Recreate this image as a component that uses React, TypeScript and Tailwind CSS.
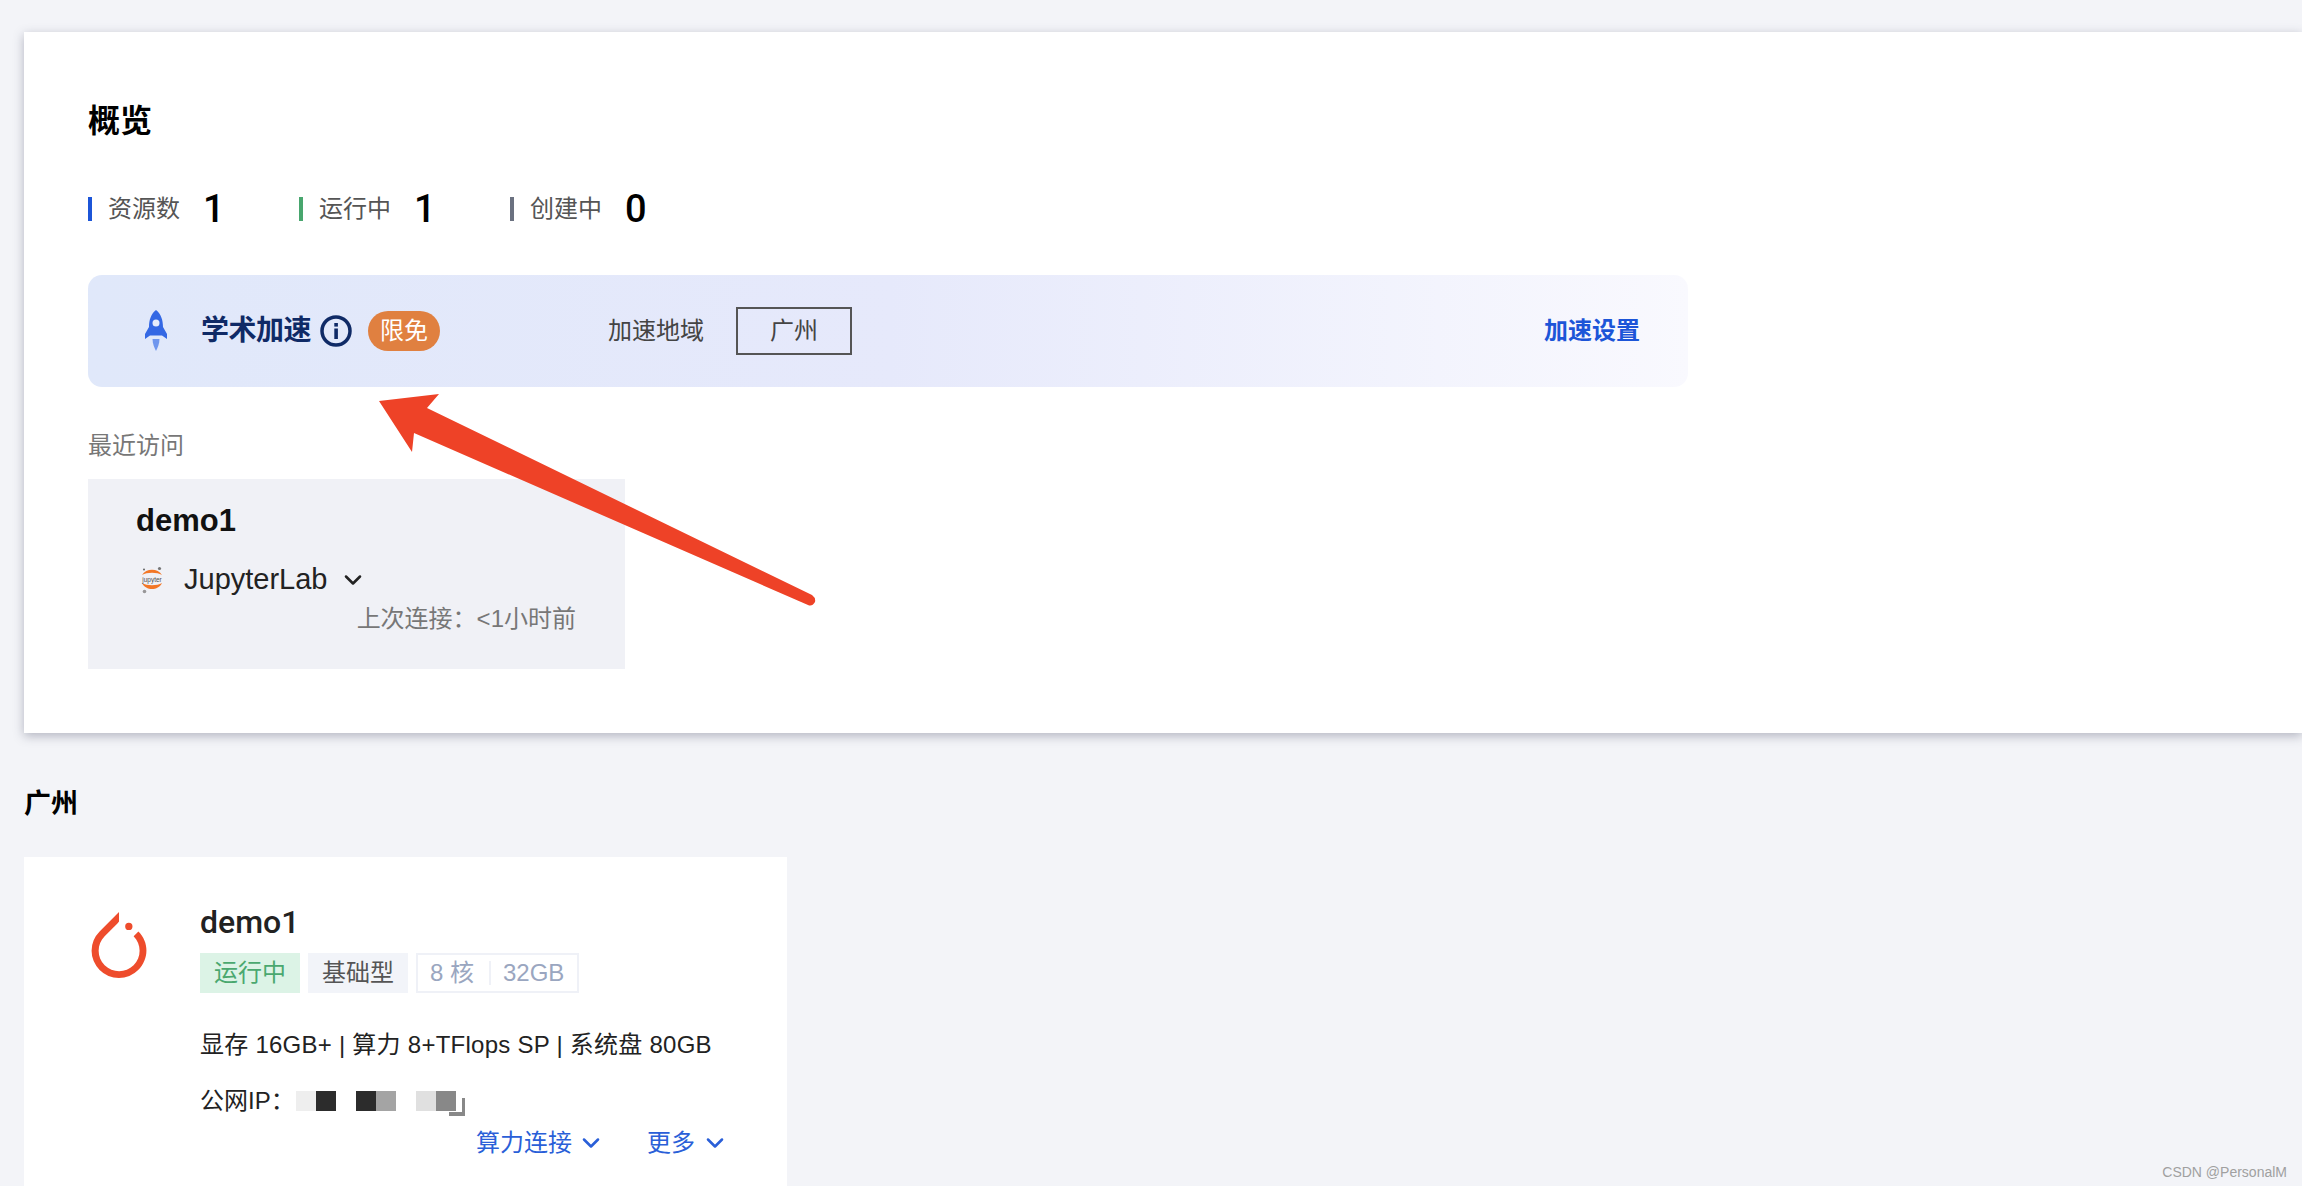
import { ChevronDown } from "lucide-react"
import { SiPytorch } from "react-icons/si"

const stats = [
  { label: "资源数", value: "1", bar: "bg-[#1c55d8]" },
  { label: "运行中", value: "1", bar: "bg-[#48a66e]" },
  { label: "创建中", value: "0", bar: "bg-[#6b7180]" },
]

function RocketIcon() {
  return (
    <svg width="24" height="42" viewBox="0 0 24 42" className="shrink-0">
      <path
        d="M12 0C17 4 19 10 19 17L23 24L23 29L18 25.500L6 25.500L1 29L1 24L5 17C5 10 7 4 12 0Z"
        fill="#3468e4"
      />
      <circle cx="12" cy="13" r="3.500" fill="#e6ecfb" />
      <path d="M8.500 29L15.500 29C15.500 34 13.500 38 12 41C10.500 38 8.500 34 8.500 29Z" fill="#6f96ee" />
    </svg>
  )
}

function InfoIcon() {
  return (
    <svg width="32" height="32" viewBox="0 0 32 32" className="shrink-0">
      <circle cx="16" cy="16" r="14" fill="none" stroke="#0f2a66" strokeWidth="3.500" />
      <rect x="14.300" y="13.500" width="3.600" height="10.500" fill="#0f2a66" />
      <rect x="14.300" y="8" width="3.600" height="3.600" fill="#0f2a66" />
    </svg>
  )
}

function JupyterIcon() {
  return (
    <svg width="26" height="28" viewBox="0 0 26 28" className="ml-[3px] shrink-0">
      <path d="M3 9C7 2 19 2 23 9C18 6 8 6 3 9Z" fill="#f37726" />
      <path d="M3 17C7 25 19 25 23 17C18 20 8 20 3 17Z" fill="#f37726" />
      <circle cx="20.500" cy="2.500" r="1.600" fill="#767677" />
      <circle cx="5" cy="3.500" r="1" fill="#616262" />
      <circle cx="5.500" cy="25.500" r="1.800" fill="#989798" />
      <text
        x="13"
        y="15.500"
        textAnchor="middle"
        fontSize="6.500"
        fill="#4e4e4e"
        fontFamily="'Liberation Sans', sans-serif"
      >
        jupyter
      </text>
    </svg>
  )
}

function BlurredIp() {
  return (
    <div className="relative flex h-5 w-[170px]">
      <div className="w-5 bg-[#eeeeee]" />
      <div className="w-5 bg-[#2c2c2c]" />
      <div className="w-5" />
      <div className="w-5 bg-[#2c2c2c]" />
      <div className="w-5 bg-[#a4a4a4]" />
      <div className="w-5" />
      <div className="w-5 bg-[#e0e0e0]" />
      <div className="w-5 bg-[#888888]" />
      <div className="absolute left-[153px] top-[21px] h-1 w-4 bg-[#888888]" />
      <div className="absolute left-[166px] top-[7px] h-[18px] w-[3px] bg-[#888888]" />
    </div>
  )
}

export default function App() {
  return (
    <div className="relative h-[1186px] overflow-hidden bg-[#f3f4f8] pl-6 pt-8 font-['Liberation_Sans','Noto_Sans_CJK_SC',sans-serif] text-[#222222]">
      {/* Overview */}
      <section className="h-[701px] bg-white pl-16 pt-[69px] shadow-[0_3px_10px_rgba(60,64,90,0.35)]">
        <h1 className="text-[32px] font-bold leading-[40px] text-black">概览</h1>

        <div className="mt-[48px] flex h-[40px] items-center">
          {stats.map((item) => (
            <div key={item.label} className="flex w-[211px] items-center">
              <span className={`h-6 w-1 ${item.bar}`} />
              <span className="ml-4 w-[95px] text-2xl text-[#555555]">{item.label}</span>
              <span className="font-['Roboto',sans-serif] text-[38px] font-medium leading-10 text-black">
                {item.value}
              </span>
            </div>
          ))}
        </div>

        {/* Academic acceleration banner */}
        <div className="mt-[46px] flex h-[112px] w-[1600px] items-center rounded-[14px] bg-gradient-to-r from-[#e0e8fa] via-[#e6e9fb] to-[#f9f9fe] pl-[56px] pr-[48px]">
          <RocketIcon />
          <span className="ml-[33px] w-[119px] text-[28px] font-bold tracking-[-0.5px] text-[#0f2a66]">学术加速</span>
          <InfoIcon />
          <span className="ml-4 flex h-10 w-[72px] items-center justify-center rounded-[20px] bg-[#e08040] text-2xl text-white">
            限免
          </span>
          <span className="ml-[168px] text-2xl text-[#444444]">加速地域</span>
          <span className="ml-[32px] flex h-12 w-[116px] items-center justify-center border-2 border-[#555555] text-2xl text-[#444444]">
            广州
          </span>
          <span className="ml-auto text-2xl font-bold text-[#1c55d8]">加速设置</span>
        </div>

        <p className="mt-[43px] text-2xl leading-8 text-[#777777]">最近访问</p>

        {/* Recent visit */}
        <div className="mt-[17px] h-[190px] w-[537px] bg-[#f0f1f6] pl-12 pr-[49px] pt-[22px]">
          <div className="text-[31px] font-bold leading-[40px] text-[#111111]">demo1</div>
          <div className="mt-[21px] flex h-9 items-center">
            <JupyterIcon />
            <span className="ml-[19px] text-[29px] text-[#222222]">JupyterLab</span>
            <ChevronDown className="ml-[11px] h-7 w-7 text-[#222222]" strokeWidth={2.2} />
          </div>
          <div className="mt-[5px] text-right text-2xl leading-8 text-[#777777]">上次连接：&lt;1小时前</div>
        </div>
      </section>

      <h2 className="mt-[53px] text-[27px] font-bold leading-9 text-black">广州</h2>

      {/* Instance card */}
      <section className="mt-[35px] flex h-[400px] w-[763px] bg-white pl-[62px] pt-[45px]">
        <SiPytorch className="mt-[10px] h-[66px] w-[66px] shrink-0 text-[#ee4c2c]" />
        <div className="ml-[48px] flex-1">
          <div className="font-['Roboto',sans-serif] text-[32px] font-medium leading-[40px] text-[#222222]">demo1</div>
          <div className="mt-[11px] flex h-10 items-stretch gap-2 text-2xl">
            <span className="flex w-[100px] items-center justify-center bg-[#dcf3e6] text-[#4aa86f]">运行中</span>
            <span className="flex w-[100px] items-center justify-center bg-[#f2f4f9] text-[#555555]">基础型</span>
            <span className="flex w-[163px] items-center border-2 border-[#eff1f7] text-[#9aa6c0]">
              <span className="w-[71px] pl-[12px]">8 核</span>
              <span className="h-[24px] w-[2px] bg-[#eff1f7]" />
              <span className="pl-[12px]">32GB</span>
            </span>
          </div>
          <div className="mt-[36px] text-2xl leading-8 tracking-[0.25px]">
            显存 16GB+ | 算力 8+TFlops SP | 系统盘 80GB
          </div>
          <div className="mt-[24px] flex h-8 items-center text-2xl">
            <span className="w-[96px]">公网IP：</span>
            <BlurredIp />
          </div>
          <div className="mt-[10px] flex h-8 items-center text-2xl text-[#2a5fd8]">
            <span className="ml-[276px]">算力连接</span>
            <ChevronDown className="ml-[5px] h-7 w-7" strokeWidth={2.2} />
            <span className="ml-[42px]">更多</span>
            <ChevronDown className="ml-[6px] h-7 w-7" strokeWidth={2.2} />
          </div>
        </div>
      </section>

      {/* Annotation arrow over the page */}
      <svg className="pointer-events-none absolute left-0 top-0" width="900" height="700" viewBox="0 0 900 700">
        <path
          d="M379 401L439 394L427 408L812 595Q816 598 815 602Q812 607 808 605L414 433L412 452Z"
          fill="#ee4227"
        />
      </svg>

      <span className="absolute right-[15px] top-[1164px] text-[14px] leading-4 text-[#a0a0a0]">CSDN @PersonalM</span>
    </div>
  )
}
